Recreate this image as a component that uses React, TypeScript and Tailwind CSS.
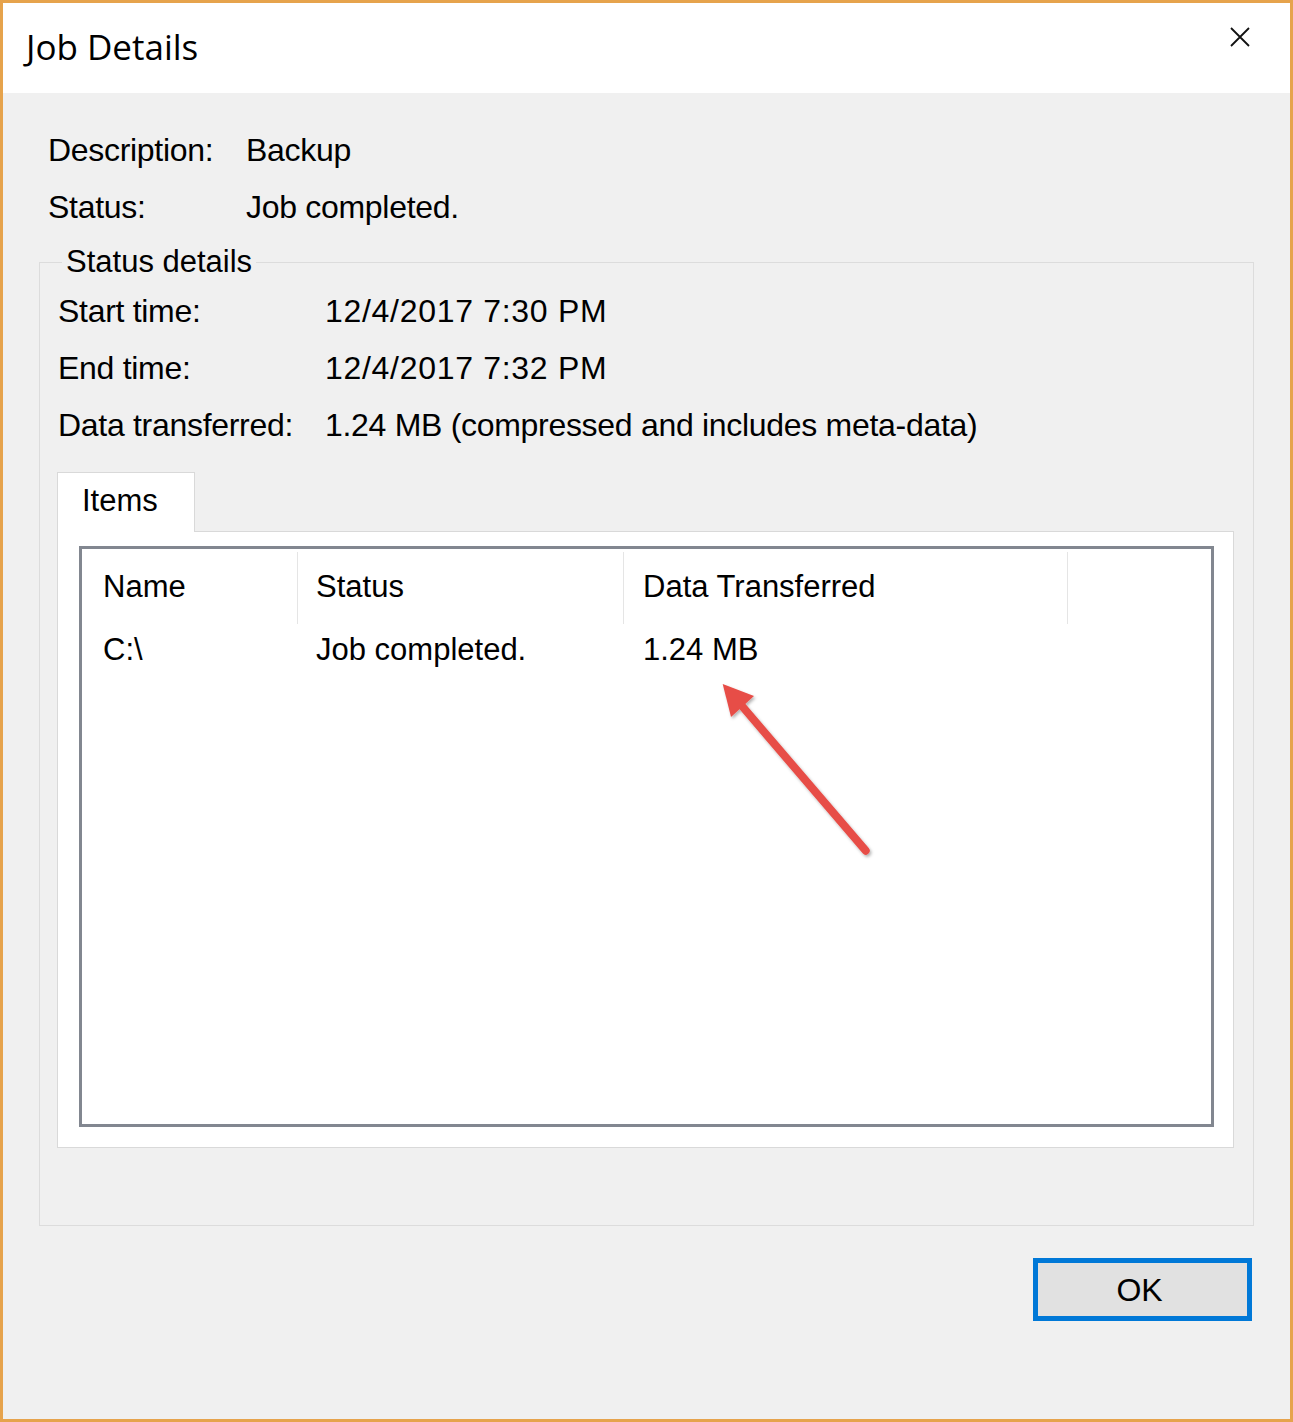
import React from "react";

const sans = { fontFamily: '"Liberation Sans", Arial, sans-serif' };

export default function App() {
  return (
    <div className="w-[1293px] h-[1422px] border-[3px] border-[#e6a34c] bg-[#f0f0f0] flex flex-col text-black" style={sans}>
      {/* Title bar */}
      <div className="h-[90px] bg-white flex justify-between shrink-0">
        <div className="pl-[23px] pt-[20px] text-[35px] leading-[48px]" style={{ fontFamily: '"Open Sans", "Noto Sans", sans-serif' }}>
          Job Details
        </div>
        <div className="pt-[24px] pr-[40px]">
          <svg width="20" height="20" viewBox="0 0 20 20">
            <path d="M1 1 L19 19 M19 1 L1 19" stroke="#111" strokeWidth="1.8" fill="none" />
          </svg>
        </div>
      </div>

      {/* Body */}
      <div className="flex-1 flex flex-col px-[36px] pt-[37px]">
        <div className="pl-[9px] text-[32px] tracking-[-0.3px]">
          <div className="flex h-[57px] leading-[40px]">
            <div className="w-[198px]">Description:</div>
            <div>Backup</div>
          </div>
          <div className="flex h-[57px] leading-[40px]">
            <div className="w-[198px]">Status:</div>
            <div>Job completed.</div>
          </div>
        </div>

        <fieldset className="border border-[#dcdcdc] h-[982px] flex flex-col">
          <legend className="ml-[22px] px-[4px] text-[31px] leading-[36px]">Status details</legend>
          <div className="pt-[11px] pl-[18px] text-[32px] tracking-[-0.3px]">
            <div className="flex h-[57px] leading-[40px]">
              <div className="w-[267px]">Start time:</div>
              <div className="tracking-[0.7px]">12/4/2017 7:30 PM</div>
            </div>
            <div className="flex h-[57px] leading-[40px]">
              <div className="w-[267px]">End time:</div>
              <div className="tracking-[0.7px]">12/4/2017 7:32 PM</div>
            </div>
            <div className="flex h-[57px] leading-[40px]">
              <div className="w-[267px]">Data transferred:</div>
              <div>1.24 MB (compressed and includes meta-data)</div>
            </div>
          </div>

          {/* Tabs */}
          <div className="mt-[10px] ml-[17px] mr-[19px] flex flex-col">
            <div className="flex">
              <div className="relative z-10 -mb-px w-[138px] h-[60px] bg-white border border-b-0 border-[#d9d9d9] pl-[24px] pt-[10px] text-[31px] leading-[36px]">
                Items
              </div>
            </div>
            <div className="h-[617px] bg-white border border-[#d9d9d9] pt-[14px] pl-[21px] pr-[19px]">
              {/* List view */}
              <div className="relative h-[581px] border-[3px] border-[#828790] bg-white text-[31px] leading-[36px]">
                <div className="flex h-[72px] mt-[3px]">
                  <div className="w-[216px] border-r border-[#e5e5e5] pl-[21px] pt-[17px]">Name</div>
                  <div className="w-[326px] border-r border-[#e5e5e5] pl-[18px] pt-[17px]">Status</div>
                  <div className="w-[444px] border-r border-[#e5e5e5] pl-[19px] pt-[17px]">Data Transferred</div>
                </div>
                <div className="flex pt-[8px]">
                  <div className="w-[216px] pl-[21px]">C:\</div>
                  <div className="w-[326px] pl-[18px]">Job completed.</div>
                  <div className="w-[444px] pl-[19px]">1.24 MB</div>
                </div>
                <svg className="absolute left-[620px] top-[120px]" width="190" height="200" viewBox="0 0 190 200">
                  <defs>
                    <filter id="sh" x="-20%" y="-20%" width="140%" height="140%">
                      <feDropShadow dx="1.5" dy="2" stdDeviation="1.5" floodColor="#000" floodOpacity="0.3" />
                    </filter>
                  </defs>
                  <g filter="url(#sh)">
                    <line x1="40" y1="37" x2="163.7" y2="181.7" stroke="#e74d47" strokeWidth="8" strokeLinecap="round" />
                    <polygon points="20.7,15 52,27 29,48" fill="#e74d47" />
                  </g>
                </svg>
              </div>
            </div>
          </div>
        </fieldset>

        <div className="flex justify-end pr-[2px] pt-[32px]">
          <div className="w-[219px] h-[63px] border-[5px] border-[#0078d7] bg-[#e1e1e1] flex items-center justify-center text-[32px] leading-none pr-[6px]">
            OK
          </div>
        </div>
      </div>
    </div>
  );
}
